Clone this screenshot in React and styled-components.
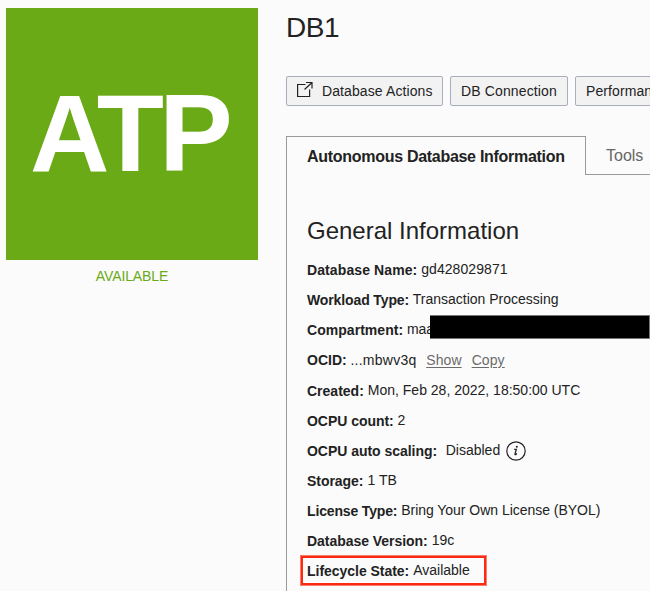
import React from "react";
import styled, { createGlobalStyle } from "styled-components";

const GlobalStyle = createGlobalStyle`
  * { box-sizing: border-box; }
  body {
    margin: 0;
    overflow: hidden;
    background: #fbfbfb;
    color: #222;
    font: 14px "Liberation Sans", Arial, sans-serif;
  }
`;

const Page = styled.main`
  display: grid;
  grid-template-columns: 252px 364px;
  column-gap: 28px;
  width: 650px;
  height: 591px;
  padding-left: 6px;
  overflow: hidden;
`;

const Summary = styled.aside`
  padding-top: 8px;
`;

const Badge = styled.div`
  height: 252px;
  padding: 62px 0 0 24px;
  background: #6aaa16;
  color: #fff;
  font: bold 110px/125px "Liberation Sans", Arial, sans-serif;
  letter-spacing: -4.6px;
`;

const Status = styled.div`
  margin-top: 8px;
  text-align: center;
  color: #6aaa16;
  line-height: 16px;
  letter-spacing: -0.12px;
`;

const Details = styled.section`
  min-width: 0;
`;

const Title = styled.h1`
  margin: 0;
  height: 76px;
  padding-top: 12px;
  font-size: 28px;
  font-weight: 400;
  line-height: 32px;
  letter-spacing: -0.5px;
`;

const Toolbar = styled.div`
  display: flex;
  gap: 7px;
`;

const Button = styled.button`
  flex: 0 0 ${(p) => p.$width}px;
  display: flex;
  align-items: center;
  height: 30px;
  padding: 0 0 0 10px;
  border: 1px solid #a9afba;
  border-radius: 2px;
  background: #f2f2f2;
  color: #222;
  font: inherit;
  letter-spacing: ${(p) => p.$track}px;
  white-space: nowrap;

  svg { margin: -3px 9px 0 0; }
`;

const Tabs = styled.nav`
  display: flex;
  height: 39px;
  margin-top: 30px;
  font-size: 16px;
  white-space: nowrap;
`;

const ActiveTab = styled.div`
  flex: 0 0 300px;
  padding-left: 20px;
  border: 1px solid #999b9e;
  border-bottom: 0;
  font-weight: 700;
  line-height: 40px;
  letter-spacing: -0.29px;
`;

const Tab = styled.div`
  flex: 1;
  padding-left: 20px;
  border-bottom: 1px solid #999b9e;
  color: #666;
  line-height: 39px;
`;

const Panel = styled.div`
  height: 416px;
  padding: 42px 0 0 20px;
  border-left: 1px solid #999b9e;
`;

const Heading = styled.h2`
  margin: 0 0 10px;
  font-size: 24px;
  font-weight: 400;
  line-height: 28px;
`;

const Row = styled.div`
  position: relative;
  display: flex;
  align-items: flex-start;
  height: ${(p) => p.$height || 30}px;
  white-space: nowrap;
`;

const Label = styled.span`
  flex: 0 0 ${(p) => p.$width}px;
  font-weight: 700;
  line-height: 30px;
  letter-spacing: ${(p) => p.$track}px;
`;

const Value = styled.span`
  line-height: ${(p) => (p.$low ? 30 : 28)}px;
  letter-spacing: ${(p) => p.$track || 0}px;
`;

const Link = styled.a`
  margin-left: ${(p) => p.$gap}px;
  color: #6b6b6b;
  line-height: 30px;
  letter-spacing: 0.1px;
  text-decoration: underline;
  text-underline-offset: 2px;
`;

const Redaction = styled.span`
  position: absolute;
  left: 123px;
  top: 0;
  width: 220px;
  height: 24px;
  border: solid #777;
  border-width: 1px 1px 1px 0;
  background: #000;
`;

const Highlight = styled.span`
  position: absolute;
  left: -6px;
  top: 0;
  width: 185px;
  height: 29px;
  border: 2px solid #fb2a12;
  box-shadow: 0 0 0 1px #fb2a1299;
`;

const InfoSvg = styled.svg`
  margin: 4px 0 0 5px;
`;

const LaunchIcon = () => (
  <svg width="16" height="17" viewBox="0 0 16 17" fill="none" stroke="#222" strokeWidth="1.2">
    <path d="M8.5 3.5H.6v12h12V8.5M7.5 8.5 15 1.5M9 1.5h6v6" />
  </svg>
);

const InfoIcon = () => (
  <InfoSvg width="22" height="22" viewBox="0 0 22 22" fill="none" stroke="#222">
    <circle cx="11" cy="11" r="9.2" strokeWidth="1.2" />
    <path d="M9.2 9.3h2.1l-1.2 4.4q-.3 1.3.5.9.6-.3 1.2-1.1" strokeWidth="1.3" />
    <circle cx="11.8" cy="6.7" r="1" fill="#222" stroke="none" />
  </InfoSvg>
);

const fields = [
  { label: "Database Name:", width: 114.2, track: 0.1, value: "gd428029871", valueTrack: 0.07 },
  { label: "Workload Type:", width: 105.7, track: -0.12, value: "Transaction Processing" },
  { label: "Compartment:", width: 99.9, track: 0.04, value: "maa", extra: <Redaction /> },
  {
    label: "OCID:", width: 43.4, track: 0, value: "...mbwv3q", valueTrack: 0.27, low: true, height: 31,
    extra: <><Link $gap={9.6}>Show</Link><Link $gap={10}>Copy</Link></>,
  },
  { label: "Created:", width: 60.8, track: 0, value: "Mon, Feb 28, 2022, 18:50:00 UTC" },
  { label: "OCPU count:", width: 90.4, track: -0.04, value: "2" },
  { label: "OCPU auto scaling:", width: 138.7, track: -0.03, value: "Disabled", extra: <InfoIcon /> },
  { label: "Storage:", width: 60.6, track: -0.04, value: "1 TB" },
  { label: "License Type:", width: 94.2, track: -0.15, value: "Bring Your Own License (BYOL)", valueTrack: -0.03 },
  { label: "Database Version:", width: 124.7, track: -0.04, value: "19c" },
  { label: "Lifecycle State:", width: 106.2, track: -0.03, value: "Available", extra: <Highlight /> },
];

export default function App() {
  return (
    <Page>
      <GlobalStyle />
      <Summary>
        <Badge>ATP</Badge>
        <Status>AVAILABLE</Status>
      </Summary>
      <Details>
        <Title>DB1</Title>
        <Toolbar>
          <Button $width={157} $track={0.1}><LaunchIcon />Database Actions</Button>
          <Button $width={118} $track={0.13}>DB Connection</Button>
          <Button $width={118} $track={0.1}>Performan</Button>
        </Toolbar>
        <Tabs>
          <ActiveTab>Autonomous Database Information</ActiveTab>
          <Tab>Tools</Tab>
        </Tabs>
        <Panel>
          <Heading>General Information</Heading>
          {fields.map((f) => (
            <Row key={f.label} $height={f.height}>
              <Label $width={f.width} $track={f.track}>{f.label}</Label>
              <Value $low={f.low} $track={f.valueTrack}>{f.value}</Value>
              {f.extra}
            </Row>
          ))}
        </Panel>
      </Details>
    </Page>
  );
}
